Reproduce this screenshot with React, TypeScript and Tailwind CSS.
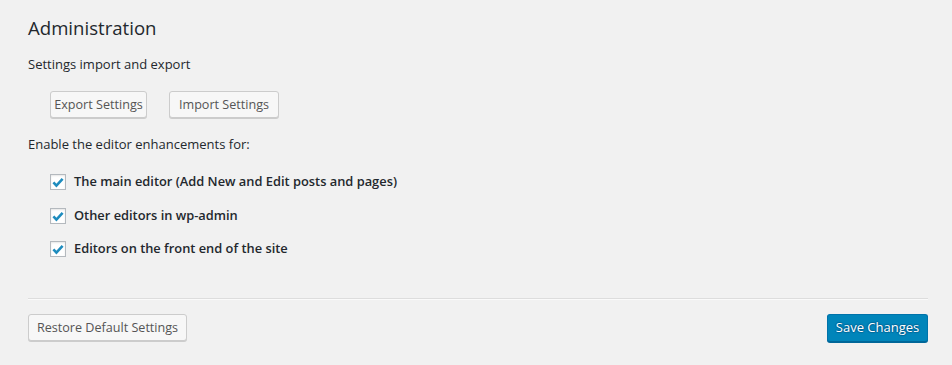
import React from "react";

const font = { fontFamily: '"Open Sans", "Noto Sans", sans-serif' };

function Btn({ children, w }: { children: React.ReactNode; w: string }) {
  return (
    <button
      className={`${w} h-[27px] whitespace-nowrap rounded-[3px] border border-[#cccccc] bg-[#f7f7f7] text-[12.6px] leading-[25px] text-[#555555] shadow-[0_1px_0_#cccccc] flex items-center justify-center`}
    >
      {children}
    </button>
  );
}

function Check({ label }: { label: string }) {
  return (
    <div className="flex items-center h-[20px]">
      <span className="w-[16px] h-[16px] border border-[#b4b9be] bg-white shadow-[inset_0_1px_2px_rgba(0,0,0,0.1)] flex items-center justify-center">
        <svg width="14" height="14" viewBox="0 0 14 14">
          <path d="M2.4 7.4 L5.4 10.6 L11.6 3.8" fill="none" stroke="#1e8cbe" strokeWidth="2.6" strokeLinecap="butt" strokeLinejoin="miter" />
        </svg>
      </span>
      <span className="ml-[8px] text-[12.85px] font-semibold text-[#23282d]">{label}</span>
    </div>
  );
}

export default function App() {
  return (
    <div style={font} className="w-[952px] h-[365px] bg-[#f1f1f1] pl-[28px] pr-[24px] text-[#23282d] overflow-hidden">
      <h2 className="pt-[16px] text-[18.6px] leading-[24px] font-normal text-[#23282d]">Administration</h2>
      <p className="mt-[14px] text-[13px] leading-[20px]">Settings import and export</p>
      <div className="mt-[17px] pl-[22px] flex gap-[22px]">
        <Btn w="w-[97px]">Export Settings</Btn>
        <Btn w="w-[110px]">Import Settings</Btn>
      </div>
      <p className="mt-[16px] text-[13px] leading-[20px]">Enable the editor enhancements for:</p>
      <div className="mt-[18px] pl-[22px] flex flex-col gap-[13.5px]">
        <Check label="The main editor (Add New and Edit posts and pages)" />
        <Check label="Other editors in wp-admin" />
        <Check label="Editors on the front end of the site" />
      </div>
      <div className="mt-[39px] border-t border-t-[#dddddd] border-b border-b-[#fafafa]" />
      <div className="mt-[14px] flex justify-between">
        <Btn w="w-[159px]">Restore Default Settings</Btn>
        <button className="w-[101px] h-[28px] whitespace-nowrap rounded-[3px] border border-[#0073aa] border-b-[#006799] bg-[#0085ba] text-[13px] text-white shadow-[0_1px_0_#006799] [text-shadow:0_-1px_1px_#006799,1px_0_1px_#006799,0_1px_1px_#006799,-1px_0_1px_#006799] flex items-center justify-center">
          Save Changes
        </button>
      </div>
    </div>
  );
}
